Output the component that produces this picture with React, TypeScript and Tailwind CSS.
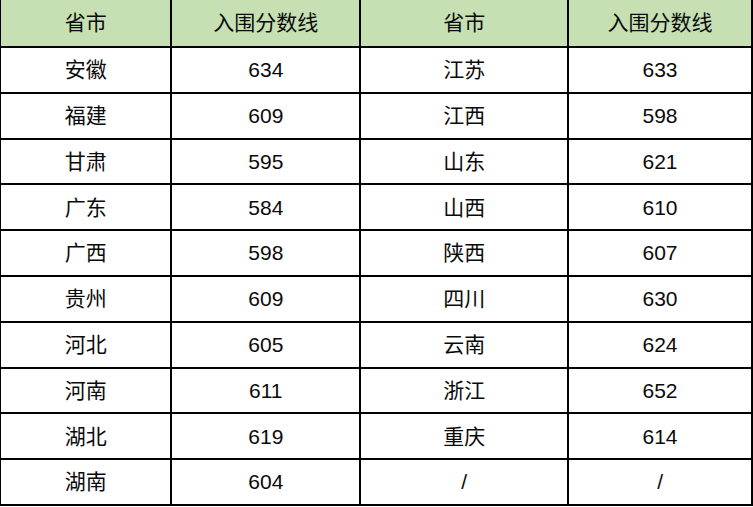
import React from "react";

const rows: [string, string, string, string][] = [
  ["安徽", "634", "江苏", "633"],
  ["福建", "609", "江西", "598"],
  ["甘肃", "595", "山东", "621"],
  ["广东", "584", "山西", "610"],
  ["广西", "598", "陕西", "607"],
  ["贵州", "609", "四川", "630"],
  ["河北", "605", "云南", "624"],
  ["河南", "611", "浙江", "652"],
  ["湖北", "619", "重庆", "614"],
  ["湖南", "604", "/", "/"],
];

export default function App() {
  return (
    <div className="w-[753px] h-[507px] bg-white overflow-hidden">
      <table
        className="border-collapse table-fixed text-[21px] text-[#0a0a0a]"
        style={{ fontFamily: '"Liberation Sans", "Noto Sans CJK SC", sans-serif' }}
      >
        <colgroup>
          <col className="w-[171px]" />
          <col className="w-[189px]" />
          <col className="w-[208px]" />
          <col className="w-[184px]" />
        </colgroup>
        <thead>
          <tr className="h-[47px] bg-[#c6e0b4]">
            {["省市", "入围分数线", "省市", "入围分数线"].map((h, i) => (
              <th
                key={i}
                className="border-2 border-black border-t-0 font-normal text-center align-middle p-0 first:border-l"
              >
                {h}
              </th>
            ))}
          </tr>
        </thead>
        <tbody>
          {rows.map((r, ri) => (
            <tr key={ri} className="h-[45.8px]">
              {r.map((c, ci) => (
                <td
                  key={ci}
                  className="border-2 border-black text-center align-middle p-0 first:border-l"
                >
                  {c}
                </td>
              ))}
            </tr>
          ))}
        </tbody>
      </table>
    </div>
  );
}
